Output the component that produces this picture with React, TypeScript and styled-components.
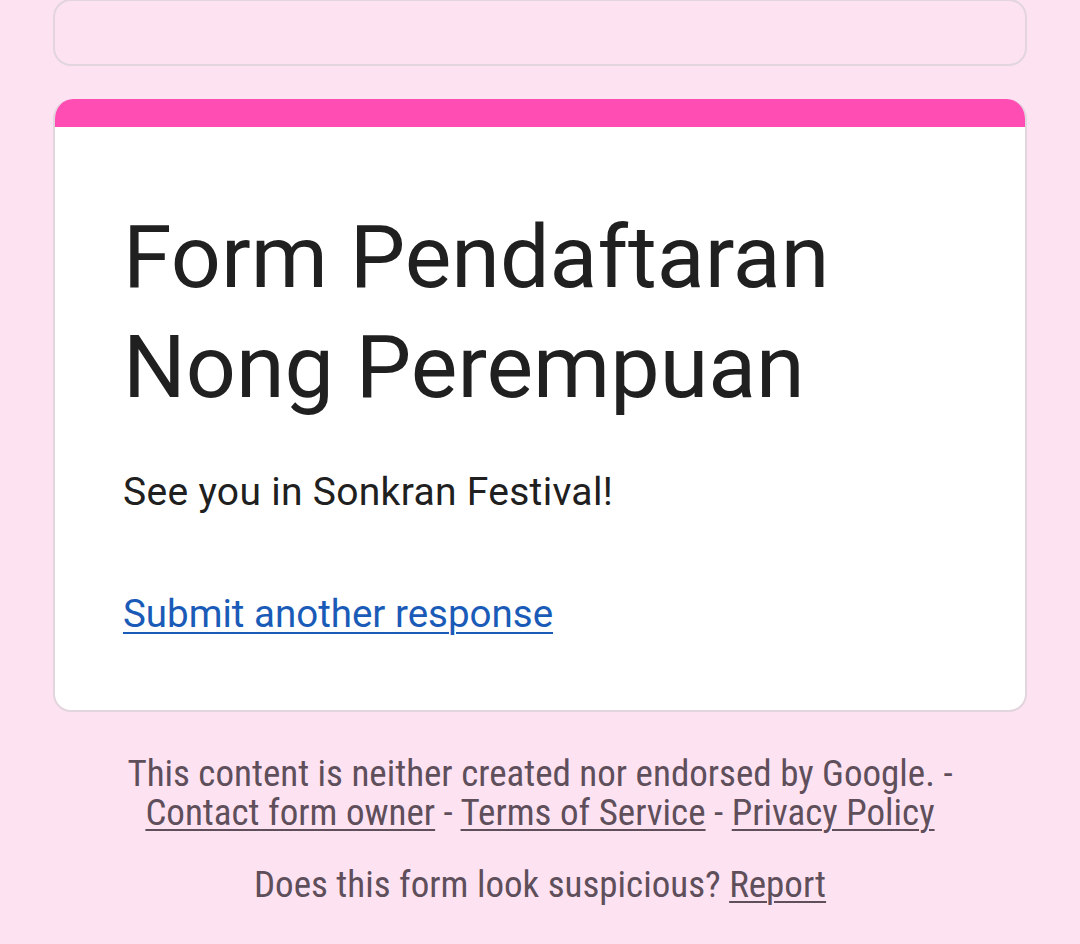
import React from 'react';
import styled, { createGlobalStyle } from 'styled-components';

const GlobalStyle = createGlobalStyle`
  html, body {
    margin: 0;
    padding: 0;
    background: #fde2f2;
  }
  body {
    font-family: Roboto, "Noto Sans", sans-serif;
  }
`;

const Page = styled.div`
  display: flex;
  flex-direction: column;
  align-items: center;
  padding: 0 53px;
  min-height: 944px;
  box-sizing: border-box;
  overflow: hidden;
`;

const PrevCard = styled.div`
  align-self: stretch;
  height: 67px;
  margin-top: -1px;
  box-sizing: border-box;
  border: 2px solid #e2d5dd;
  border-radius: 18px;
  background: #fde2f2;
`;

const Card = styled.div`
  align-self: stretch;
  margin-top: 33px;
  background: #fff;
  border: 2px solid #e2d5dd;
  border-top: none;
  border-radius: 20px 20px 18px 18px;
  overflow: hidden;
`;

const AccentBar = styled.div`
  height: 28px;
  background: #ff4db4;
  margin: 0 -2px;
`;

const CardBody = styled.div`
  padding: 75px 68px 70px;
  display: flex;
  flex-direction: column;
`;

const Title = styled.h1`
  margin: 0;
  font-family: Roboto, sans-serif;
  font-weight: 400;
  font-size: 88px;
  line-height: 110px;
  color: #202020;
`;

const Message = styled.p`
  margin: 44px 0 0;
  font-family: Roboto, sans-serif;
  font-size: 39px;
  letter-spacing: 0.3px;
  line-height: 52px;
  color: #202020;
`;

const AnotherLink = styled.a`
  margin-top: 70px;
  align-self: flex-start;
  font-family: Roboto, sans-serif;
  font-size: 38.5px;
  line-height: 52px;
  color: #1a5bb8;
  text-decoration: underline;
  text-underline-offset: 5px;
  text-decoration-thickness: 2px;
`;

const Footer = styled.div`
  margin-top: 42px;
  text-align: center;
  font-family: "Roboto Condensed", "Liberation Sans Narrow", Roboto, sans-serif;
  font-size: 37px;
  line-height: 39px;
  color: #5e4f5b;
`;

const FooterLine = styled.p<{ $gap?: number }>`
  margin: ${(p) => p.$gap ?? 0}px 0 0;
`;

const FooterLink = styled.a`
  color: inherit;
  text-decoration: underline;
  text-underline-offset: 4px;
  text-decoration-thickness: 2px;
`;

export default function App() {
  return (
    <>
      <GlobalStyle />
      <Page>
        <PrevCard />
        <Card>
          <AccentBar />
          <CardBody>
            <Title>
              Form Pendaftaran
              <br />
              Nong Perempuan
            </Title>
            <Message>See you in Sonkran Festival!</Message>
            <AnotherLink href="#">Submit another response</AnotherLink>
          </CardBody>
        </Card>
        <Footer>
          <FooterLine>This content is neither created nor endorsed by Google. -</FooterLine>
          <FooterLine>
            <FooterLink href="#">Contact form owner</FooterLink> -{' '}
            <FooterLink href="#">Terms of Service</FooterLink> -{' '}
            <FooterLink href="#">Privacy Policy</FooterLink>
          </FooterLine>
          <FooterLine $gap={33}>
            Does this form look suspicious? <FooterLink href="#">Report</FooterLink>
          </FooterLine>
        </Footer>
      </Page>
    </>
  );
}
